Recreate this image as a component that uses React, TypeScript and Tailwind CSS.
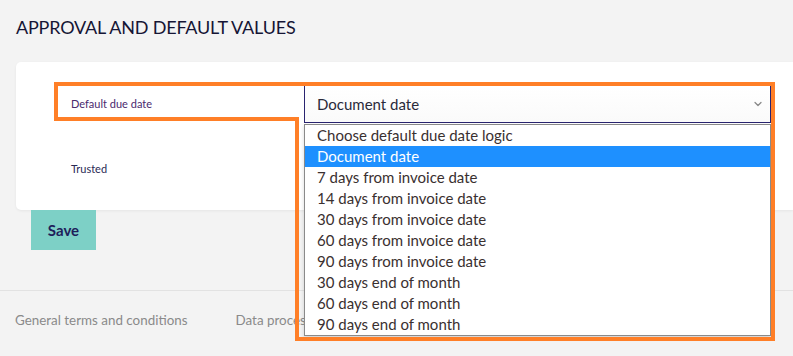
import { ChevronDown } from 'lucide-react';

const options = [
	'Choose default due date logic',
	'Document date',
	'7 days from invoice date',
	'14 days from invoice date',
	'30 days from invoice date',
	'60 days from invoice date',
	'90 days from invoice date',
	'30 days end of month',
	'60 days end of month',
	'90 days end of month',
];

const App = () => {
	return (
		<div className="relative w-[793px] h-[356px] overflow-hidden bg-[#f3f3f3] font-['Lato',sans-serif] text-[#20204a]">
			<h1 className="pl-4 pt-[15px] text-[18px] leading-[24px] font-normal tracking-[-0.2px] text-[#151535]">
				APPROVAL AND DEFAULT VALUES
			</h1>

			<div className="ml-4 mt-[23px] h-[148px] rounded-l-[5px] bg-white shadow-[0_1px_3px_rgba(0,0,0,0.06)]">
				<div className="flex items-center pt-[23px]">
					<p className="w-[288px] pl-[55px] text-[11px] text-[#4a2a6e]">Default due date</p>
					<div className="relative w-[467px]">
						<div className="flex h-[38px] items-center justify-between border border-[#2a2470] bg-gradient-to-b from-white to-[#fafafa] pl-[12px] pr-[6px] text-[15px] text-[#2a2a3a]">
							<span>Document date</span>
							<ChevronDown className="h-[12px] w-[12px] text-[#888]" strokeWidth={2.5} />
						</div>
						<ul className="absolute left-0 top-[39px] z-10 w-[467px] border border-[#8a8a8a] bg-white py-0 text-[15px] leading-[21px] text-[#3a3030] shadow-[0_2px_4px_rgba(0,0,0,0.15)]">
							{options.map((opt, i) => (
								<li
									key={opt}
									className={`h-[21px] pl-[12px] ${i === 1 ? 'bg-[#1e90ff] text-white' : ''}`}
								>
									{opt}
								</li>
							))}
						</ul>
					</div>
				</div>
				<p className="mt-[38px] pl-[55px] text-[11px] text-[#2a2a55]">Trusted</p>
			</div>

			<button className="ml-[31px] flex h-[40px] w-[65px] items-center justify-center bg-[#7dd0c6] text-[15px] font-bold text-[#1e1e5a]">
				Save
			</button>

			<div className="mt-[40px] border-t border-[#e2e2e2]" />
			<div className="flex gap-[48px] pl-[15px] pt-[19px] text-[13.4px] text-[#8a8a8a]">
				<span>General terms and conditions</span>
				<span>Data processing agreement</span>
			</div>

			<svg
				className="pointer-events-none absolute left-0 top-0 z-20"
				width="793"
				height="356"
				viewBox="0 0 793 356"
			>
				<path
					d="M56 84 H773 V339 H297 V119 H56 Z"
					fill="none"
					stroke="#ff7f27"
					strokeWidth="4"
				/>
			</svg>
		</div>
	);
};

export default App;
